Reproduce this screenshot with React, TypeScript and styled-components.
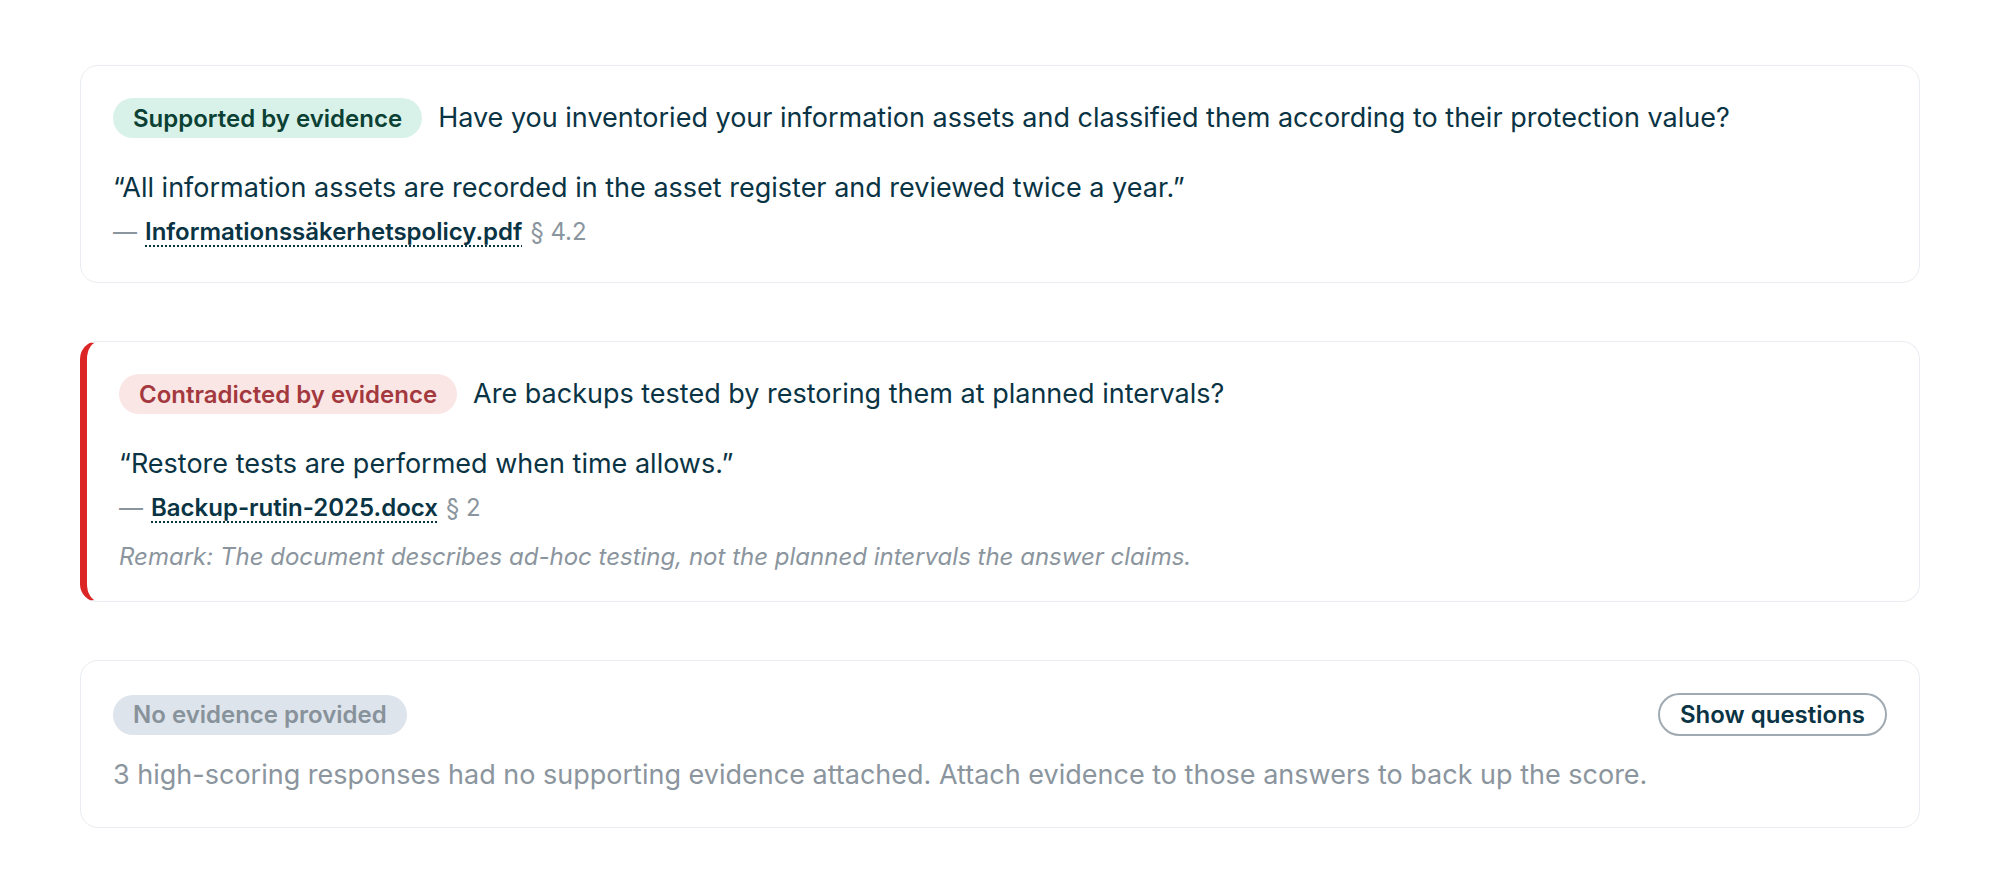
import React from "react";
import styled, { createGlobalStyle, css } from "styled-components";

const GlobalStyle = createGlobalStyle`
  html, body {
    margin: 0;
    padding: 0;
    background: #ffffff;
  }
  body {
    font-family: Inter, "Noto Sans", "Liberation Sans", sans-serif;
    color: #0a3444;
    -webkit-font-smoothing: antialiased;
  }
  * {
    box-sizing: border-box;
  }
`;

const Page = styled.main`
  display: flex;
  flex-direction: column;
  gap: 58px;
  padding: 65px 80px 40px;
`;

type Tone = "supported" | "contradicted" | "missing";

const Card = styled.section<{ $flagged?: boolean }>`
  display: flex;
  flex-direction: column;
  padding: 32px;
  border: 1.5px solid #e9edf1;
  border-radius: 18px;
  background: #ffffff;

  ${({ $flagged }) =>
    $flagged &&
    css`
      border-left: 7px solid #dc2626;
    `}
`;

const HeaderRow = styled.div<{ $spread?: boolean }>`
  display: flex;
  align-items: center;
  gap: 16px;
  justify-content: ${({ $spread }) => ($spread ? "space-between" : "flex-start")};
`;

const badgeTones = {
  supported: css`
    background: #d9f2e9;
    color: #0b4134;
  `,
  contradicted: css`
    background: #fbe6e6;
    color: #a3393e;
  `,
  missing: css`
    background: #dee4eb;
    color: #87929b;
  `,
};

const Badge = styled.span<{ $tone: Tone }>`
  display: inline-flex;
  align-items: center;
  height: 40px;
  padding: 0 20px;
  border-radius: 20px;
  font-size: 24px;
  font-weight: 600;
  white-space: nowrap;
  flex-shrink: 0;
  ${({ $tone }) => badgeTones[$tone]}
`;

const Question = styled.h3`
  margin: 0;
  font-size: 27px;
  font-weight: 400;
  line-height: 40px;
  color: #0a3444;
`;

const Quote = styled.p`
  margin: 30px 0 0;
  font-size: 27px;
  line-height: 40px;
  color: #0a3444;
`;

const Source = styled.div`
  margin-top: 6px;
  font-size: 24px;
  line-height: 36px;
  color: #8b959e;
`;

const FileLink = styled.a`
  margin-left: 8px;
  font-weight: 600;
  color: #0a3444;
  text-decoration: underline dotted #0a3444;
  text-decoration-thickness: 2px;
  text-underline-offset: 5px;
  cursor: pointer;
`;

const Section = styled.span`
  margin-left: 8px;
  color: #8b959e;
`;

const Remark = styled.p`
  margin: 19px 0 0;
  font-size: 24px;
  line-height: 24px;
  font-style: italic;
  color: #8b959e;
`;

const Note = styled.p`
  margin: 19px 0 0;
  font-size: 27px;
  line-height: 40px;
  color: #8b959e;
`;

const OutlineButton = styled.button`
  height: 43px;
  padding: 0 20px;
  border: 2px solid #a0aab2;
  border-radius: 22px;
  background: #ffffff;
  font-family: inherit;
  font-size: 24px;
  font-weight: 600;
  color: #0a3444;
  cursor: pointer;
`;

type Finding = {
  tone: Tone;
  label: string;
  question: string;
  quote: string;
  file: string;
  section: string;
  remark?: string;
};

const findings: Finding[] = [
  {
    tone: "supported",
    label: "Supported by evidence",
    question:
      "Have you inventoried your information assets and classified them according to their protection value?",
    quote:
      "“All information assets are recorded in the asset register and reviewed twice a year.”",
    file: "Informationssäkerhetspolicy.pdf",
    section: "§ 4.2",
  },
  {
    tone: "contradicted",
    label: "Contradicted by evidence",
    question: "Are backups tested by restoring them at planned intervals?",
    quote: "“Restore tests are performed when time allows.”",
    file: "Backup-rutin-2025.docx",
    section: "§ 2",
    remark:
      "Remark: The document describes ad-hoc testing, not the planned intervals the answer claims.",
  },
];

const App = () => {
  return (
    <>
      <GlobalStyle />
      <Page>
        {findings.map((item) => (
          <Card key={item.file} $flagged={item.tone === "contradicted"}>
            <HeaderRow>
              <Badge $tone={item.tone}>{item.label}</Badge>
              <Question>{item.question}</Question>
            </HeaderRow>
            <Quote>{item.quote}</Quote>
            <Source>
              —<FileLink>{item.file}</FileLink>
              <Section>{item.section}</Section>
            </Source>
            {item.remark && <Remark>{item.remark}</Remark>}
          </Card>
        ))}
        <Card>
          <HeaderRow $spread>
            <Badge $tone="missing">No evidence provided</Badge>
            <OutlineButton type="button">Show questions</OutlineButton>
          </HeaderRow>
          <Note>
            3 high-scoring responses had no supporting evidence attached. Attach
            evidence to those answers to back up the score.
          </Note>
        </Card>
      </Page>
    </>
  );
};

export default App;
